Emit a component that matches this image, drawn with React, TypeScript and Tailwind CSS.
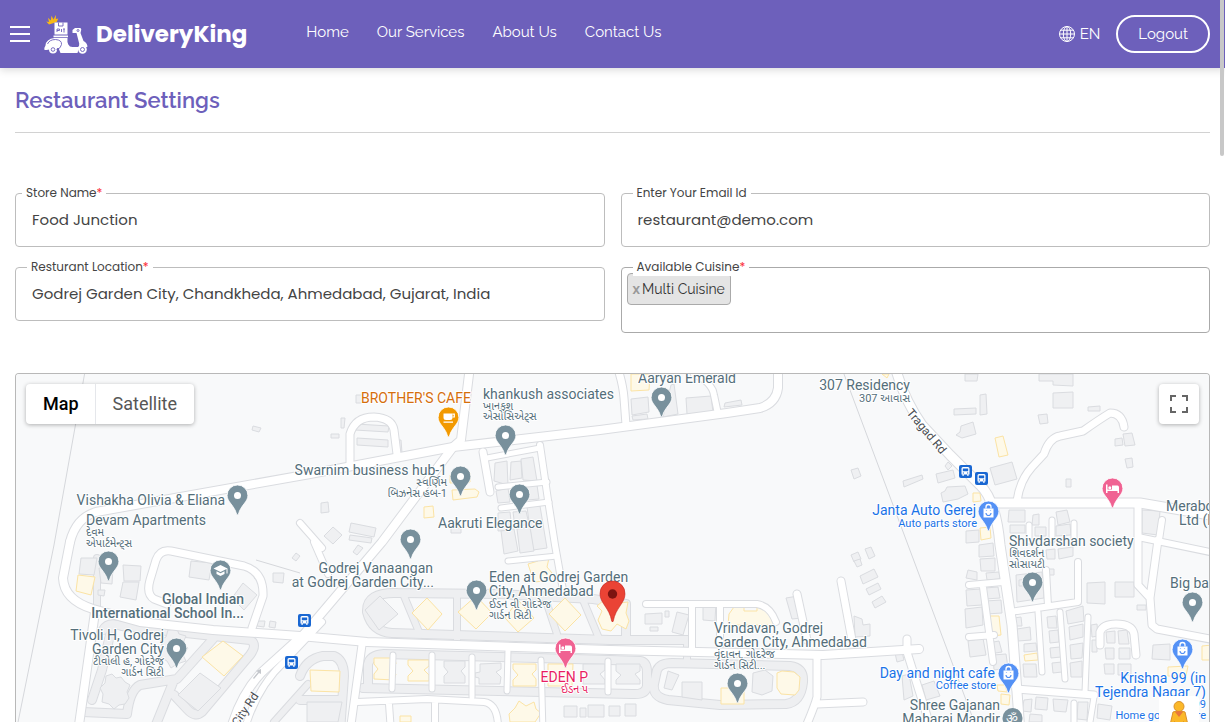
import { useState, type ReactNode } from "react";

type PinKind = "place" | "shop" | "hotel" | "cafe" | "school";

const navLinks = ["Home", "Our Services", "About Us", "Contact Us"];

const pinColors: Record<PinKind, string> = {
  place: "#78909c",
  school: "#78909c",
  shop: "#5491f5",
  hotel: "#f06292",
  cafe: "#f29900",
};

const pins: { x: number; y: number; kind: PinKind }[] = [
  { x: 661, y: 397, kind: "place" },
  { x: 448, y: 417, kind: "cafe" },
  { x: 505, y: 435, kind: "place" },
  { x: 460, y: 476, kind: "place" },
  { x: 519, y: 494, kind: "place" },
  { x: 237, y: 495, kind: "place" },
  { x: 410, y: 539, kind: "place" },
  { x: 108, y: 561, kind: "place" },
  { x: 220, y: 570, kind: "school" },
  { x: 476, y: 590, kind: "place" },
  { x: 176, y: 648, kind: "place" },
  { x: 565, y: 648, kind: "hotel" },
  { x: 737, y: 683, kind: "place" },
  { x: 1112, y: 488, kind: "hotel" },
  { x: 988, y: 511, kind: "shop" },
  { x: 1032, y: 582, kind: "place" },
  { x: 1192, y: 602, kind: "place" },
  { x: 1182, y: 649, kind: "shop" },
  { x: 1008, y: 673, kind: "shop" },
];

type Label = {
  x: number;
  y: number;
  text: string;
  anchor?: "start" | "middle" | "end";
  size?: number;
  color?: string;
  weight?: number;
};

const slate = "#546e7a";
const blue = "#1a73e8";
const pink = "#e91e63";

const labels: Label[] = [
  { x: 638, y: 383, text: "Aaryan Emerald" },
  { x: 910, y: 390, text: "307 Residency", anchor: "end" },
  { x: 910, y: 402, text: "307 આવાસ", anchor: "end", size: 11 },
  { x: 361, y: 403, text: "BROTHER'S CAFE", color: "#d56e0c" },
  { x: 483, y: 399, text: "khankush associates" },
  { x: 483, y: 410, text: "ખાનકુશ", size: 11 },
  { x: 483, y: 420, text: "એસોસિએટ્સ", size: 11 },
  { x: 447, y: 475, text: "Swarnim business hub-1", anchor: "end" },
  { x: 447, y: 486, text: "સ્વર્ણિમ", anchor: "end", size: 11 },
  { x: 447, y: 497, text: "બિઝનેસ હબ-1", anchor: "end", size: 11 },
  { x: 225, y: 505, text: "Vishakha Olivia & Eliana", anchor: "end" },
  { x: 86, y: 525, text: "Devam Apartments" },
  { x: 86, y: 536, text: "દેવમ", size: 11 },
  { x: 86, y: 547, text: "એપાર્ટમેન્ટ્સ", size: 11 },
  { x: 438, y: 528, text: "Aakruti Elegance" },
  { x: 433, y: 573, text: "Godrej Vanaangan", anchor: "end" },
  { x: 434, y: 587, text: "at Godrej Garden City...", anchor: "end" },
  { x: 244, y: 604, text: "Global Indian", anchor: "end", weight: 500 },
  { x: 244, y: 618, text: "International School In...", anchor: "end", weight: 500 },
  { x: 164, y: 640, text: "Tivoli H, Godrej", anchor: "end" },
  { x: 164, y: 654, text: "Garden City", anchor: "end" },
  { x: 164, y: 665, text: "ટીવોલી હ, ગોદરેજ", anchor: "end", size: 11 },
  { x: 164, y: 676, text: "ગાર્ડન સિટી", anchor: "end", size: 11 },
  { x: 489, y: 582, text: "Eden at Godrej Garden" },
  { x: 489, y: 596, text: "City, Ahmedabad" },
  { x: 489, y: 608, text: "ઈડન વી ગોદરેજ", size: 11 },
  { x: 489, y: 619, text: "ગાર્ડન સિટી", size: 11 },
  { x: 588, y: 682, text: "EDEN P", anchor: "end", color: pink },
  { x: 588, y: 693, text: "ઈડન ૫", anchor: "end", size: 11, color: pink },
  { x: 714, y: 633, text: "Vrindavan, Godrej" },
  { x: 714, y: 647, text: "Garden City, Ahmedabad" },
  { x: 714, y: 658, text: "વૃંદાવન, ગોદરેજ", size: 11 },
  { x: 714, y: 669, text: "ગાર્ડન સિટી...", size: 11 },
  { x: 976, y: 515, text: "Janta Auto Gerej", anchor: "end", color: blue },
  { x: 977, y: 527, text: "Auto parts store", anchor: "end", size: 11, color: blue },
  { x: 1009, y: 546, text: "Shivdarshan society" },
  { x: 1009, y: 557, text: "શિવદર્શન", size: 11 },
  { x: 1009, y: 568, text: "સોસાયટી", size: 11 },
  { x: 1166, y: 511, text: "Merabo" },
  { x: 1179, y: 525, text: "Ltd (R" },
  { x: 1170, y: 588, text: "Big bazaar" },
  { x: 995, y: 678, text: "Day and night cafe", anchor: "end", color: blue },
  { x: 996, y: 689, text: "Coffee store", anchor: "end", size: 11, color: blue },
  { x: 1206, y: 683, text: "Krishna 99 (in", anchor: "end", color: blue },
  { x: 1206, y: 697, text: "Tejendra Nagar 7)", anchor: "end", color: blue },
  { x: 1206, y: 708, text: "કૃષ્ણા 99", anchor: "end", size: 11, color: blue },
  { x: 1206, y: 719, text: "Home goods store", anchor: "end", size: 11, color: blue },
  { x: 1000, y: 710, text: "Shree Gajanan", anchor: "end" },
  { x: 1000, y: 724, text: "Maharaj Mandir", anchor: "end" },
];

// Public roads, drawn white with a grey casing
const roads: { d: string; w: number }[] = [
  { w: 8, d: "M78 732 95 612" },
  { w: 8, d: "M70 542Q76 518 96 512L310 474 453 447 600 430 727 413 760 408Q776 403 778 388V366" },
  { w: 8, d: "M70 542 63 578Q64 600 93 609L140 622 213 630 300 636 367 642 610 650 823 655 919 649" },
  { w: 8, d: "M470 366 461 440 453 447 382 542 304 634 262 672Q240 695 230 732" },
  { w: 6, d: "M322 622 284 662Q256 688 244 732" },
  { w: 7, d: "M350 463V434Q355 417 374 417Q392 418 394 430L397 454" },
  { w: 7, d: "M167 604 154 599Q146 594 150 580L156 560Q160 549 171 551L244 566Q264 572 263 596L252 628" },
  { w: 7, d: "M483 452 490 492" },
  { w: 5, d: "M487 458 540 448" },
  { w: 6, d: "M540 445 548 500 555 545 563 590" },
  { w: 5, d: "M498 487 547 482M501 508 549 502M508 561 557 556" },
  { w: 7, d: "M617 366Q623 384 624 398L626 425" },
  { w: 6, d: "M694 374Q712 382 714 395L718 414" },
  { w: 9, d: "M895 366Q903 398 922 425L950 455 980 485Q996 500 1000 545L1012 625 1020 732" },
  { w: 9, d: "M995 503H1140L1210 515" },
  { w: 7, d: "M1017 501Q1020 480 1032 467L1044 454Q1049 438 1060 436L1083 431Q1100 419 1110 413 1122 413 1124 427" },
  { w: 7, d: "M1138 505V585L1150 598 1152 625 1157 629 1210 639M1158 540 1150 598" },
  { w: 6, d: "M1138 537 1210 552M1162 520 1159 540" },
  { w: 5, d: "M1029 525V541M1052 520V540M1074 523V540" },
  { w: 6, d: "M1010 612 1078 602V562M1046 570 1048 606M969 585 1003 582M983 587 993 662M969 637 994 635" },
  { w: 5, d: "M1038 612 1042 672M1060 612 1065 679M1088 617 1085 692" },
  { w: 7, d: "M1016 689 1094 695M1100 645V632Q1103 624 1116 624 1132 624 1134 634L1136 655" },
  { w: 5, d: "M1074 703V722M1094 697 1090 722" },
  { w: 6, d: "M646 604H757Q770 606 776 622M692 605V648M720 605V645" },
  { w: 7, d: "M797 594 807 640M841 581 852 640M907 639V652L932 732" },
  { w: 7, d: "M817 655V697Q815 705 807 724M817 704 863 702" },
  { w: 7, d: "M362 645 350 732" },
  { w: 6, d: "M357 702 427 699 484 702Q499 704 498 732M389 704 391 732M435 702V732" },
  { w: 5, d: "M393 655 392 689M432 655V689M472 657V697M508 650 507 691M541 660 543 732M608 661V692" },
  { w: 6, d: "M300 523 322 548M314 542 328 574" },
];

// Society lanes inside the blocks
const lanes: { d: string; w: number }[] = [
  { w: 8, d: "M397 593 500 594 593 599 626 604V640M397 593Q366 592 367 612 372 632 392 633L610 640H690" },
  { w: 6, d: "M404 596 419 632M457 596V642M545 598 557 634M583 600 598 636" },
  { w: 8, d: "M368 684V664Q370 655 384 654L610 660 640 661Q647 662 647 672V686Q646 695 632 694L363 688" },
  { w: 8, d: "M654 684 657 670Q660 663 672 663L790 666Q804 668 803 682 801 702 786 704L720 705 668 700Q652 697 654 684Z" },
  { w: 6, d: "M687 645V664" },
  { w: 6, d: "M97 558V612" },
  { w: 8, d: "M103 630Q108 621 122 626L250 640Q258 644 250 655L202 712Q195 718 187 709L174 695" },
  { w: 8, d: "M213 639 177 679 140 685Q130 690 127 714L83 712M174 680 153 732M112 626 102 670 92 700" },
  { w: 8, d: "M300 676Q306 659 323 656H334Q344 660 344 676L340 732M300 700H342" },
  { w: 6, d: "M274 722 308 684" },
];

const thinLines = ["M86 366 54 545 16 732", "M841 366 908 545 978 732", "M256 560 300 573"];

const greyBlocks = [
  "356,424 389,426 388,432 355,430", "357,438 388,440 388,447 357,445",
  "341,418 345,418 344,428 341,428", "331,434 339,434 339,438 331,438", "397,440 401,440 402,453 398,453",
  "253,426 261,428 259,432 252,430", "356,395 363,395 363,403 356,403", "321,503 328,502 329,512 321,513",
  "333,527 342,535 333,544 324,536", "351,523 376,528 374,537 349,532", "350,535 372,538 371,543 349,540",
  "495,463 507,461 508,485 494,481", "511,462 521,461 522,478 510,480", "521,459 533,457 537,481 523,480",
  "496,491 508,488 510,502 498,503", "512,489 519,488 520,499 512,501", "525,487 537,485 539,499 527,500",
  "498,513 510,512 512,530 498,531", "501,531 514,529 518,551 504,554", "513,512 526,511 529,524 515,527",
  "527,507 540,506 547,548 533,550", "517,529 530,527 534,551 520,553", "451,528 461,528 461,533 451,533",
  "631,399 648,397 649,412 632,415", "632,416 647,414 648,419 633,420", "671,385 674,384 678,414 663,417",
  "686,398 711,396 713,412 687,414", "725,403 741,400 742,405 724,407", "851,470 858,468 861,476 854,479",
  "965,374 978,374 977,381 965,381", "1039,374 1073,374 1073,386 1053,385 1053,381 1039,381",
  "1053,393 1073,392 1073,408 1053,408", "980,395 986,394 987,414 980,415", "954,409 976,408 976,414 954,415",
  "961,426 973,422 976,434 962,438 956,435 960,432", "1038,415 1047,414 1048,423 1040,424",
  "1088,407 1100,406 1100,411 1088,411", "1115,439 1122,438 1123,445 1115,446", "1123,434 1132,433 1135,445 1125,446",
  "1125,459 1132,458 1133,467 1127,468", "990,468 1012,462 1017,479 995,485", "1066,479 1071,479 1071,487 1066,487",
  "903,481 922,475 923,479 904,487", "936,474 953,470 955,478 938,483", "941,493 945,491 947,487 965,486 968,494 958,499 943,502",
  "948,462 952,466 948,470 945,466", "1009,510 1025,510 1025,522 1008,522", "1010,525 1025,525 1025,533 1010,533",
  "1033,515 1039,514 1039,525 1032,525", "1035,527 1046,527 1046,536 1035,536", "1056,512 1067,510 1070,522 1058,525",
  "1056,526 1070,524 1071,535 1056,536", "966,531 979,530 979,542 966,543", "1142,510 1160,511 1158,535 1142,533",
  "851,555 858,552 861,559 854,562", "854,561 860,559 862,565 857,567", "865,549 871,547 875,556 869,559",
  "860,576 874,569 878,577 863,584", "866,589 878,583 881,589 869,595", "872,602 882,596 886,602 875,608",
  "979,545 993,543 994,556 979,557", "980,559 995,558 995,571 981,571", "968,570 977,572 977,580 966,578",
  "986,573 999,572 1000,579 987,580", "966,590 981,589 982,605 967,606", "985,588 998,587 1000,598 985,599",
  "965,609 982,607 983,625 966,628", "986,601 1001,600 1002,613 986,614", "968,641 983,638 986,655 970,657",
  "988,643 999,641 1002,652 989,654", "993,655 1006,654 1008,668 994,670", "1016,575 1042,572 1044,598 1017,602",
  "1019,580 1027,579 1027,586 1019,586", "1014,618 1021,617 1022,626 1014,626", "1017,629 1030,627 1031,640 1018,641",
  "1024,644 1036,643 1037,651 1024,652", "1023,664 1036,664 1037,677 1024,677", "1047,617 1056,616 1057,628 1048,628",
  "1049,631 1058,630 1059,642 1050,643", "1050,648 1060,647 1061,657 1051,658", "1052,663 1062,662 1062,672 1053,673",
  "1066,611 1083,606 1084,621 1068,624", "1069,627 1083,624 1083,637 1070,640", "1070,645 1083,643 1082,658 1071,659",
  "1070,663 1082,661 1082,677 1071,677", "1091,625 1097,624 1098,636 1092,637", "1092,640 1097,640 1097,652 1092,652",
  "1106,632 1115,631 1115,643 1107,643", "1118,631 1127,630 1129,644 1119,644", "1105,648 1114,648 1114,659 1106,659",
  "1119,648 1130,648 1130,659 1119,659", "1104,664 1114,664 1114,674 1105,674", "1118,664 1131,664 1131,675 1118,675",
  "1087,583 1105,582 1105,604 1087,603", "1115,582 1134,582 1134,597 1115,597", "1137,605 1146,605 1146,610 1137,610",
  "1046,550 1055,549 1055,559 1047,559", "1058,549 1073,547 1073,556 1059,559", "1048,569 1054,569 1054,575 1048,575",
  "1153,645 1170,644 1170,660 1152,659",
  "1024,700 1032,699 1031,712 1022,711", "1036,697 1048,698 1047,710 1035,709", "1053,699 1068,700 1066,712 1054,711",
  "1030,714 1042,715 1042,722 1029,722", "1078,702 1088,702 1087,720 1077,719", "1098,704 1112,706 1110,720 1097,718",
  "81,558 97,558 94,575 79,574", "99,568 113,567 112,584 101,583", "123,565 141,566 140,581 124,581",
  "123,582 139,582 136,600 120,597", "98,590 105,590 104,596 98,595", "191,561 212,563 209,580 189,577",
  "243,583 257,595 244,610 232,598", "252,572 258,571 259,577 255,579", "273,573 284,573 283,583 273,582",
  "296,553 300,556 296,561 292,558", "257,621 265,621 264,627 257,626", "270,621 276,622 275,628 269,627",
  "200,673 221,688 198,711 178,695", "380,596 398,614 379,630 365,610", "358,545 363,548 357,555 353,552",
  "444,661 465,661 465,667 461,671 465,676 465,683 444,683 444,676 448,672 444,667",
  "480,664 501,663 501,669 496,672 501,677 500,684 479,684 479,678 475,677 475,673 480,672",
  "583,664 605,664 605,670 600,674 605,680 605,684 583,684 583,680 588,675 583,670",
  "616,664 640,664 640,671 635,674 640,680 640,684 616,684 616,680 621,675 616,671",
  "564,706 577,706 577,717 564,717", "580,708 586,708 586,717 580,717", "588,705 604,705 604,717 588,717",
  "609,706 620,706 620,716 609,716", "625,704 636,704 636,716 625,716", "645,614 662,613 662,624 645,624",
  "665,611 669,611 669,617 665,617", "650,627 658,627 658,631 650,631", "677,612 689,615 683,635 672,632",
  "703,602 716,602 715,621 703,620", "786,598 798,596 802,618 792,619", "854,616 862,619 863,625 870,624 870,636 855,637",
  "753,673 765,670 773,676 772,691 762,695 752,692", "668,671 679,675 672,690 664,688", "682,682 702,682 702,700 682,697",
  "895,653 902,652 904,660 897,662", "902,676 909,674 913,696 904,700", "922,685 934,681 940,696 926,700",
  "307,702 342,702 338,722 307,722",
  "106,676 112,674 116,678 121,677 125,682 130,685 127,692 129,698 125,704 119,705 114,709 109,704 102,702 103,694 100,688 105,683",
  "168,630 177,629 179,634 186,636 183,643 188,648 183,655 186,661 177,664 171,668 167,661 160,657 163,648 160,640 166,637",
];

const yellowBlocks = [
  "631,374 650,374 649,390 631,391", "424,507 433,506 434,517 424,518", "452,490 475,489 479,492 477,497 453,500",
  "450,475 470,473 470,482 450,483", "995,438 1003,436 1008,455 999,457", "973,493 980,493 981,501 973,502",
  "980,528 990,527 991,538 981,540", "78,575 95,577 91,595 76,591", "223,641 243,656 224,676 202,657",
  "427,598 442,614 428,630 412,613", "476,596 492,613 476,629 458,612", "518,600 534,618 518,632 505,618",
  "565,598 581,615 565,631 549,614", "374,658 395,658 396,664 390,668 396,674 394,680 374,679 374,674 378,669 374,664",
  "408,660 429,660 429,666 424,670 429,675 429,681 408,681 408,676 413,671 408,665",
  "513,664 536,664 536,670 532,674 536,679 536,686 513,686 513,680 518,675 513,669",
  "548,664 573,664 572,686 548,686", "528,564 538,561 541,556 549,558 547,567 552,573 544,581 534,582",
  "310,670 340,671 339,692 311,691", "400,716 411,716 411,722 400,722",
  "519,701 526,706 534,702 536,709 541,713 535,722 510,722 509,714 515,708",
  "734,607 744,607 744,611 757,611 757,607 769,607 769,612 774,614 774,625 728,625 729,614",
  "777,673 782,671 794,672 800,677 799,690 795,695 781,694 777,688", "721,688 744,688 744,704 721,704",
  "989,616 999,616 1001,635 991,636", "1024,655 1037,653 1038,660 1025,661", "1001,694 1010,695 1009,705 1001,704",
  "997,685 1005,685 1007,692 998,691", "1202,646 1212,645 1212,660 1202,660", "1168,667 1188,666 1186,676 1168,676",
  "604,600 610,610 615,612 620,603 628,602 626,613 629,621 626,629 617,624 611,631 602,629 598,620 602,611 597,606",
  "882,374 889,374 887,378",
];

function ScooterLogo() {
  return (
    <svg viewBox="0 0 43 40" className="h-10 w-11 shrink-0" aria-hidden="true">
      <path fill="#f9b916" d="M4.500 10.500 1.800 7.500l2.700.5L3.500 3.800 6.300 6.500 7 1.800 9 5.500 11.500.8 11.300 5 13.800 4.500 12.200 8z" />
      <g fill="#fff">
        <path d="M10 8.500h13v12H10zM9 21.500h14.500v1.700H9z" />
        <path d="M10 24h13q-.5 4 .8 6.500Q25 33 28 33h5.500q1.500-1 1.200-3.500L32 19h-4v-3l2.500-2h5.500l.8 1.500-.8 3.500 3 8q3.500 1.500 4 5.500l-1 .8h-4q-4 0-5 5.700H16L14 34 2 36H0q-.5-2.500 1-4.500Q1.500 25 10 24z" />
        <circle cx="8.500" cy="35.500" r="4" />
        <circle cx="38" cy="35.500" r="4.300" />
      </g>
      <g fill="none" stroke="#6d60bb" strokeWidth=".9">
        <path d="M14 8.500v3.500h4.500V8.500M12.500 18v-3h2.500v1.500h-2.500M17 15v3M19.500 15v3.500M18.500 15h2" />
        <path d="M3 30q2-4.500 8-4.500 6.500.5 6 5-.5 4-5 5" />
        <circle cx="8.500" cy="35.500" r="1.800" />
        <circle cx="38" cy="35.500" r="2" />
        <circle cx="33.500" cy="16.500" r="1" />
      </g>
    </svg>
  );
}

function GlobeIcon() {
  return (
    <svg viewBox="0 0 16 16" className="size-4" fill="none" stroke="currentColor" aria-hidden="true">
      <circle cx="8" cy="8" r="7.500" />
      <ellipse cx="8" cy="8" rx="3.700" ry="7.500" />
      <path d="M8 .5v15M.5 8h15M1.800 4.200h12.400M1.800 11.800h12.400" />
    </svg>
  );
}

function PinGlyph({ kind }: { kind: PinKind }) {
  if (kind === "shop") {
    return (
      <g>
        <path fill="#fff" d="M-5-3H5V6H-5z" />
        <path fill="none" stroke="#fff" strokeWidth="1.300" d="M-2.500-3V-4.500a2.500 2.500 0 0 1 5 0V-3" />
        <path fill="none" stroke="#5491f5" strokeWidth="1.200" d="M-2.500 1.500a2.500 2.500 0 0 0 5 0M-2-1v.6M2-1v.6" />
      </g>
    );
  }
  if (kind === "hotel") {
    return (
      <g>
        <path fill="#fff" d="M-6.500-4h1.500v5H-.5v-4H5q1.500 0 1.500 2V4.500H5V2.500H-5v2h-1.500z" />
        <circle cx="-2.700" cy="-.8" r="1.500" fill="#fff" />
      </g>
    );
  }
  if (kind === "cafe") {
    return (
      <g>
        <path fill="#fff" d="M-5-4H4V0Q4 2.500 1.500 2.500H-2.500Q-5 2.500-5 0zM-5 4H4.500v1.300H-5z" />
        <path fill="none" stroke="#fff" strokeWidth="1.200" d="M4-3.300H5.800V-.5H4" />
      </g>
    );
  }
  if (kind === "school") {
    return <path fill="#fff" d="M0-5.500 7-2V3H6V-1.500L0 1.500-7-2zM-4 .8 0 2.800 4 .8V3.500L0 5.500-4 3.500z" />;
  }
  return <circle r="3.500" fill="#fff" />;
}

function BusStop({ x, y }: { x: number; y: number }) {
  return (
    <g transform={`translate(${x + 0.5} ${y + 0.5})`}>
      <rect x="-6.500" y="-6.500" width="13" height="13" rx="2" fill="#1967d2" />
      <path fill="#fff" d="M-4-3Q-4-4.500-2.500-4.500h5Q4-4.500 4-3V3H3V4.500H1.800V3H-1.800V4.500H-3V3H-4z" />
      <path fill="#1967d2" d="M-2.700-3H2.700V-.3H-2.700zM-2.700 1h1.200v1.100h-1.200zM1.500 1h1.200v1.100H1.500z" />
    </g>
  );
}

function MapCanvas() {
  return (
    <svg
      viewBox="16 374 1193 348"
      preserveAspectRatio="xMidYMin slice"
      className="absolute inset-0 size-full bg-[#f8f9fa] font-['Roboto','Noto_Sans_Gujarati',sans-serif]"
      role="img"
      aria-label="Map of Godrej Garden City"
    >
      <g fill="none" stroke="#d5d7db" strokeWidth="1">
        {thinLines.map((d) => (
          <path key={d} d={d} />
        ))}
      </g>
      <g fill="none" strokeLinecap="round" strokeLinejoin="round">
        {lanes.map((r) => (
          <path key={r.d} d={r.d} stroke="#dadce0" strokeWidth={r.w + 2} />
        ))}
        {lanes.map((r) => (
          <path key={r.d} d={r.d} stroke="#eeeff1" strokeWidth={r.w} />
        ))}
      </g>
      <g fill="#eff0f2" stroke="#dadce0">
        {greyBlocks.map((p) => (
          <polygon key={p} points={p} />
        ))}
      </g>
      <g fill="#fef9e8" stroke="#fbe3a4">
        {yellowBlocks.map((p) => (
          <polygon key={p} points={p} />
        ))}
      </g>
      <g fill="none" strokeLinecap="round" strokeLinejoin="round">
        {roads.map((r) => (
          <path key={r.d} d={r.d} stroke="#dadce0" strokeWidth={r.w + 2} />
        ))}
        {roads.map((r) => (
          <path key={r.d} d={r.d} stroke="#fff" strokeWidth={r.w} />
        ))}
      </g>
      <path d="m253 678 5-6-2-1 5-2 0 5-2-1-5 6z" fill="#c4c7cc" />

      <BusStop x={965} y={471} />
      <BusStop x={981} y={478} />
      <BusStop x={304} y={620} />
      <BusStop x={291} y={662} />

      <g stroke="#fff" strokeWidth="2" strokeLinejoin="round" paintOrder="stroke">
        {labels.map((l) => (
          <text
            key={`${l.text}-${l.y}`}
            x={l.x}
            y={l.y}
            textAnchor={l.anchor ?? "start"}
            fontSize={l.size ?? 14}
            fontWeight={l.weight ?? 400}
            fill={l.color ?? slate}
          >
            {l.text}
          </text>
        ))}
        <text transform="translate(906 413) rotate(50)" fontSize="12" fill="#4a4e53">
          Tragad Rd
        </text>
        <text transform="translate(238 727) rotate(-56)" fontSize="12" fill="#4a4e53">
          City Rd
        </text>
      </g>

      {pins.map((p) => (
        <g key={`${p.x}-${p.y}`} transform={`translate(${p.x + 0.5} ${p.y + 0.5})`}>
          <path
            fill={pinColors[p.kind]}
            stroke="#fff"
            strokeWidth=".8"
            d="M0-10.500A10.400 10.400 0 0 1 10.400 0C10.400 6.500 3 10 1 18.500Q0 20-1 18.500C-3 10-10.400 6.500-10.400 0A10.400 10.400 0 0 1 0-10.500z"
          />
          <PinGlyph kind={p.kind} />
        </g>
      ))}

      <circle cx="1012.500" cy="718" r="10" fill="#78909c" />
      <text x="1012" y="723" textAnchor="middle" fontSize="13" fill="#fff">
        ॐ
      </text>

      <g transform="translate(612.500 594)">
        <path
          fill="#ea4335"
          stroke="#c5221f"
          strokeWidth=".6"
          d="M0-13A12.500 12.500 0 0 1 12.500 0C12.500 9 3 14 .8 27Q0 29-.8 27C-3 14-12.500 9-12.500 0A12.500 12.500 0 0 1 0-13z"
        />
        <circle r="4.700" fill="#7d1411" />
      </g>
    </svg>
  );
}

function Field({
  id,
  label,
  required,
  labelClass = "left-3",
  children,
}: {
  id: string;
  label: string;
  required?: boolean;
  labelClass?: string;
  children: ReactNode;
}) {
  return (
    <div className="relative">
      {children}
      <label
        htmlFor={id}
        className={`absolute -top-2 h-[17px] bg-white px-1 font-['Poppins','Inter',sans-serif] text-xs leading-4 text-[#444] ${labelClass}`}
      >
        {label}
        {required && <span className="text-red-500">*</span>}
      </label>
    </div>
  );
}

const inputClass =
  "h-[54px] w-full rounded border border-[#bdbdbd] bg-white px-4 pb-0.5 font-['Poppins','Inter',sans-serif] text-[15px] text-[#444] outline-none";

export default function App() {
  const [mapType, setMapType] = useState("Map");
  const [cuisines, setCuisines] = useState(["Multi Cuisine"]);

  return (
    <div className="relative flex h-screen flex-col overflow-hidden bg-white font-['Raleway','Lato',sans-serif]">
      <header className="z-10 flex h-[68px] shrink-0 items-center bg-[#6d60bb] pr-[15px] pl-2.5 text-white shadow-[0_2px_8px_rgba(0,0,0,0.15)]">
        <button type="button" aria-label="Open menu" className="flex w-5 flex-col gap-[5px]">
          <span className="h-0.5 w-full bg-white" />
          <span className="h-0.5 w-full bg-white" />
          <span className="h-0.5 w-full bg-white" />
        </button>
        <a href="#" className="ml-3.5 flex items-center gap-2">
          <ScooterLogo />
          <span className="font-['Poppins','Noto_Sans',sans-serif] text-[23px] font-bold">DeliveryKing</span>
        </a>
        <nav className="ml-[59px] flex gap-7 pb-1 text-[15px]" aria-label="Main">
          {navLinks.map((item) => (
            <a key={item} href="#">
              {item}
            </a>
          ))}
        </nav>
        <button type="button" className="ml-auto flex items-center gap-[5px] text-[15px]">
          <GlobeIcon />
          EN
        </button>
        <button
          type="button"
          className="ml-4 h-[38px] rounded-full border-2 border-white px-5 text-[15px]"
        >
          Logout
        </button>
      </header>

      <main className="flex flex-1 flex-col px-[15px]">
        <h1 className="border-b border-[#d2d2d2] pt-4 pb-4 text-[22px] leading-8 font-semibold text-[#6d60bb]">
          Restaurant Settings
        </h1>

        <form className="mt-[60px] grid grid-cols-2 gap-x-4 gap-y-5">
          <Field id="store-name" label="Store Name" required labelClass="left-[7px]">
            <input id="store-name" className={inputClass} defaultValue="Food Junction" />
          </Field>
          <Field id="email" label="Enter Your Email Id">
            <input id="email" type="email" className={inputClass} defaultValue="restaurant@demo.com" />
          </Field>
          <Field id="location" label="Resturant Location" required>
            <input
              id="location"
              className={inputClass}
              defaultValue="Godrej Garden City, Chandkheda, Ahmedabad, Gujarat, India"
            />
          </Field>
          <Field id="cuisine" label="Available Cuisine" required>
            <div className="flex h-[66px] items-start rounded border border-[#aaa] p-[5px] text-[#333]">
              {cuisines.map((name) => (
                <span
                  key={name}
                  className="flex h-8 items-center gap-0.5 rounded border border-[#aaa] bg-[#e4e4e4] px-[5px] text-sm"
                >
                  <button
                    type="button"
                    aria-label={`Remove ${name}`}
                    className="font-bold text-[#999]"
                    onClick={() => setCuisines(cuisines.filter((c) => c !== name))}
                  >
                    x
                  </button>
                  {name}
                </span>
              ))}
              <input id="cuisine" className="min-w-0 flex-1 bg-transparent outline-none" />
            </div>
          </Field>
        </form>

        <section className="relative mt-10 flex-1 overflow-hidden rounded-t border border-b-0 border-[#b8b8b8]">
          <MapCanvas />
          <div className="absolute top-2.5 left-2.5 flex h-10 rounded-sm bg-white font-['Roboto',sans-serif] text-lg shadow-[0_1px_4px_rgba(0,0,0,0.3)]">
            {["Map", "Satellite"].map((type) => (
              <button
                key={type}
                type="button"
                onClick={() => setMapType(type)}
                className={`px-[17px] last:shadow-[-1px_0_0_#e5e7eb] ${
                  mapType === type ? "font-medium text-black" : "text-[#565656]"
                }`}
              >
                {type}
              </button>
            ))}
          </div>
          <button
            type="button"
            aria-label="Toggle fullscreen view"
            className="absolute top-2.5 right-2.5 grid size-10 place-items-center rounded-sm bg-white shadow-[0_1px_4px_rgba(0,0,0,0.3)]"
          >
            <svg viewBox="0 0 18 18" className="size-[18px]" fill="#666" aria-hidden="true">
              <path d="M0 0h6v2H2v4H0zM12 0h6v6h-2V2h-4zM0 12h2v4h4v2H0zM16 12h2v6h-6v-2h4z" />
            </svg>
          </button>
          <button
            type="button"
            aria-label="Street View"
            className="absolute right-2.5 -bottom-3.5 flex h-10 w-10 justify-center rounded-sm bg-white pt-1"
          >
            <svg viewBox="0 0 20 34" className="h-[34px] w-5" aria-hidden="true">
              <path d="M4 12q6-3 12 0l2.500 11-2.500 1.500-1.500-3V34H5.500V21.500l-1.500 3L1.500 23z" fill="#fbb829" stroke="#d9902a" />
              <circle cx="10" cy="6.500" r="5" fill="#fbb829" stroke="#d9902a" />
              <path d="m6 12 4 5 4-5q-4-2-8 0z" fill="#e8763c" />
            </svg>
          </button>
        </section>
      </main>

      <div className="absolute top-0 right-px z-20 h-39 w-1 rounded-b bg-[#c8c8c8]" />
    </div>
  );
}
